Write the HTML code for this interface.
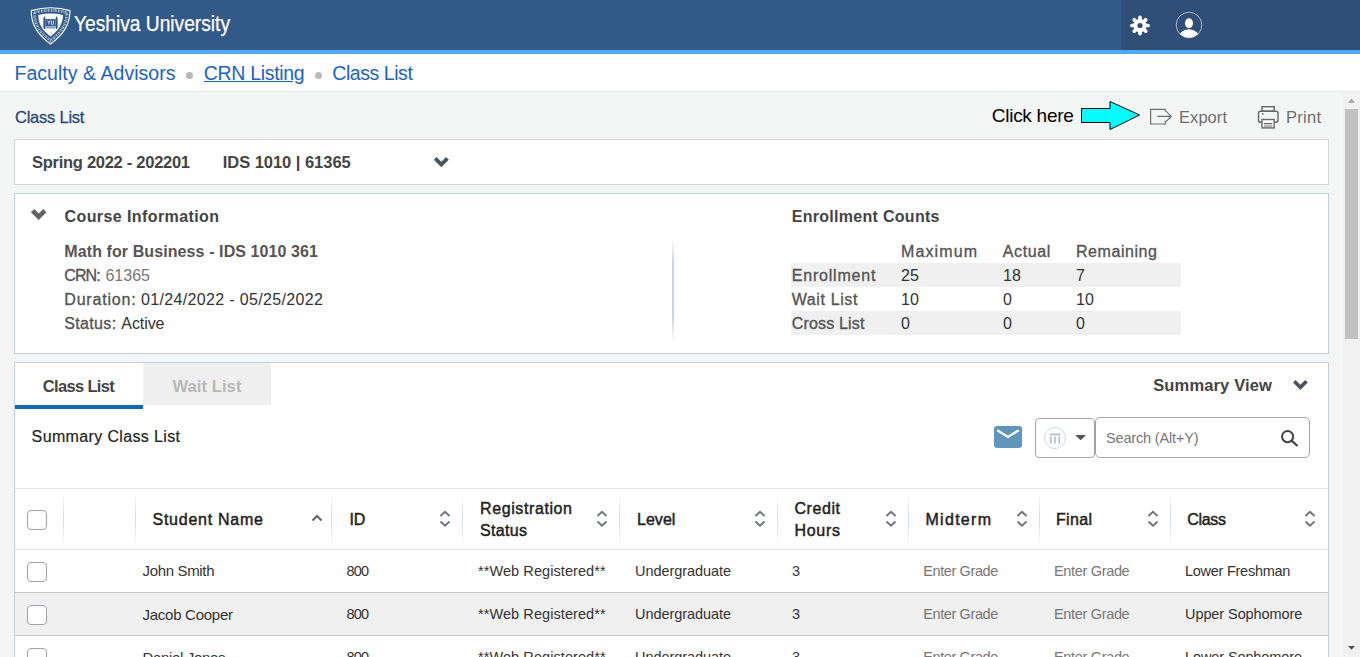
<!DOCTYPE html>
<html><head><meta charset="utf-8"><title>Class List</title>
<style>
*{box-sizing:border-box;margin:0;padding:0}
html,body{width:1360px;height:657px;overflow:hidden}
body{font-family:"Liberation Sans",sans-serif;background:#f4f6f6;position:relative}
.t{position:absolute;white-space:nowrap}
.r{position:absolute}
svg{position:absolute;overflow:visible}
</style></head><body>
<div class="r" style="left:0px;top:0px;width:1360px;height:50px;background:#325a88"></div>
<div class="r" style="left:1121px;top:0px;width:239px;height:50px;background:#2f4f78"></div>
<div class="r" style="left:0px;top:50px;width:1360px;height:4px;background:#50a8f8"></div>
<div class="r" style="left:0px;top:54px;width:1360px;height:37px;background:#fff"></div>
<div class="r" style="left:0px;top:91px;width:1360px;height:1px;background:#e6e8e8"></div>
<div class="t" style="left:14.50px;top:64.00px;font-size:19.5px;line-height:19.5px;color:#1a63c8;letter-spacing:0.035px;">Faculty &amp; Advisors</div>
<div class="r" style="left:186px;top:72px;width:7px;height:7px;background:#b9b9b9;border-radius:50%"></div>
<div class="t" style="left:203.70px;top:64.00px;font-size:19.5px;line-height:19.5px;color:#1a63c8;letter-spacing:-0.305px;">CRN Listing</div>
<div class="r" style="left:204px;top:81px;width:89px;height:1.2px;background:#1a63c8"></div>
<div class="r" style="left:315px;top:72px;width:7px;height:7px;background:#b9b9b9;border-radius:50%"></div>
<div class="t" style="left:332.30px;top:64.00px;font-size:19.5px;line-height:19.5px;color:#1a63c8;letter-spacing:-0.444px;">Class List</div>
<div class="r" style="left:1343px;top:92px;width:17px;height:565px;background:#f1f1f1"></div>
<div class="r" style="left:1345px;top:109px;width:13px;height:230px;background:#c1c1c1"></div>
<svg style="left:1343px;top:92px" width="17" height="565"><path d="M4.8 10.8 L12.2 10.8 L8.5 6.7Z" fill="#a3a3a3"/><path d="M5 554 L12 554 L8.5 557.8Z" fill="#505050"/></svg>
<div class="t" style="left:15.00px;top:109.00px;font-size:16.5px;line-height:16.5px;color:#29497a;letter-spacing:-0.233px;-webkit-text-stroke:0.3px #29497a;">Class List</div>
<div class="t" style="left:991.80px;top:106.00px;font-size:19px;line-height:19px;color:#000;letter-spacing:-0.272px;">Click here</div>
<svg style="left:1080px;top:100px" width="62" height="32"><path d="M1.5 8.5 H30 V1.5 L59.5 15 L30 29.5 V22.5 H1.5 Z" fill="#00ffff" stroke="#000" stroke-width="1"/></svg>
<div class="t" style="left:1179.00px;top:109.00px;font-size:16.5px;line-height:16.5px;color:#6e6e6e;letter-spacing:0.060px;">Export</div>
<div class="t" style="left:1286.00px;top:109.00px;font-size:16.5px;line-height:16.5px;color:#6e6e6e;letter-spacing:0.262px;">Print</div>
<div class="r" style="left:14px;top:139px;width:1315px;height:46px;background:#fff;border:1px solid #d6d6d6"></div>
<div class="t" style="left:32.00px;top:154.00px;font-size:16.5px;line-height:16.5px;color:#444;font-weight:bold;letter-spacing:-0.276px;">Spring 2022 - 202201</div>
<svg style="left:0;top:0" width="1" height="1"><path d="M433.80 159.70 L436.50 157.00 L441.30 161.80 L446.10 157.00 L448.80 159.70 L441.30 167.20Z" fill="#4b5560"/></svg>
<div class="t" style="left:222.70px;top:154.00px;font-size:16.5px;line-height:16.5px;color:#444;font-weight:bold;letter-spacing:-0.030px;">IDS 1010 | 61365</div>
<div class="r" style="left:14px;top:193px;width:1315px;height:161px;background:#fff;border:1px solid #c3d0dc"></div>
<div class="t" style="left:64.50px;top:209.00px;font-size:16px;line-height:16px;color:#444;font-weight:bold;letter-spacing:0.409px;">Course Information</div>
<div class="t" style="left:64.30px;top:244.00px;font-size:16px;line-height:16px;color:#555;font-weight:bold;letter-spacing:0.095px;">Math for Business - IDS 1010 361</div>
<div class="t" style="left:791.70px;top:209.00px;font-size:16px;line-height:16px;color:#444;font-weight:bold;letter-spacing:0.294px;">Enrollment Counts</div>
<div class="r" style="left:14px;top:362px;width:1315px;height:300px;background:#fff;border:1px solid #c3d0dc"></div>
<svg style="left:0;top:0" width="1" height="1"><path d="M30.90 212.30 L34.20 209.00 L38.70 213.50 L43.20 209.00 L46.50 212.30 L38.70 220.10Z" fill="#646464"/></svg>
<div class="t" style="left:64.30px;top:268.00px;font-size:16px;line-height:16px;color:#555;letter-spacing:-0.900px;-webkit-text-stroke:0.35px #555;">CRN:</div>
<div class="t" style="left:105.40px;top:268.00px;font-size:16px;line-height:16px;color:#777;letter-spacing:0.025px;">61365</div>
<div class="t" style="left:64.30px;top:292.00px;font-size:16px;line-height:16px;color:#555;letter-spacing:0.812px;-webkit-text-stroke:0.35px #555;">Duration:</div>
<div class="t" style="left:141.00px;top:292.00px;font-size:16px;line-height:16px;color:#333;letter-spacing:0.345px;">01/24/2022 - 05/25/2022</div>
<div class="t" style="left:64.30px;top:316.00px;font-size:16px;line-height:16px;color:#555;letter-spacing:0.333px;-webkit-text-stroke:0.35px #555;">Status:</div>
<div class="t" style="left:121.30px;top:316.00px;font-size:16px;line-height:16px;color:#333;letter-spacing:-0.070px;">Active</div>
<div class="r" style="left:672px;top:237px;width:2px;height:105px;background:linear-gradient(to bottom,rgba(200,210,222,0),#ccd4de 25%,#ccd4de 75%,rgba(200,210,222,0))"></div>
<div class="r" style="left:791px;top:263px;width:390px;height:24px;background:#f0f0f0"></div>
<div class="r" style="left:791px;top:311px;width:390px;height:24px;background:#f0f0f0"></div>
<div class="t" style="left:901.00px;top:244.00px;font-size:16px;line-height:16px;color:#555;letter-spacing:1.108px;-webkit-text-stroke:0.35px #555;">Maximum</div>
<div class="t" style="left:1002.80px;top:244.00px;font-size:16px;line-height:16px;color:#555;letter-spacing:0.630px;-webkit-text-stroke:0.35px #555;">Actual</div>
<div class="t" style="left:1076.00px;top:244.00px;font-size:16px;line-height:16px;color:#555;letter-spacing:0.562px;-webkit-text-stroke:0.35px #555;">Remaining</div>
<div class="t" style="left:791.70px;top:268.00px;font-size:16px;line-height:16px;color:#555;letter-spacing:0.811px;-webkit-text-stroke:0.35px #555;">Enrollment</div>
<div class="t" style="left:901.00px;top:268.00px;font-size:16px;line-height:16px;color:#333;">25</div>
<div class="t" style="left:1003.00px;top:268.00px;font-size:16px;line-height:16px;color:#333;">18</div>
<div class="t" style="left:1076.00px;top:268.00px;font-size:16px;line-height:16px;color:#333;">7</div>
<div class="t" style="left:791.70px;top:292.00px;font-size:16px;line-height:16px;color:#555;letter-spacing:0.619px;-webkit-text-stroke:0.35px #555;">Wait List</div>
<div class="t" style="left:901.00px;top:292.00px;font-size:16px;line-height:16px;color:#333;">10</div>
<div class="t" style="left:1003.00px;top:292.00px;font-size:16px;line-height:16px;color:#333;">0</div>
<div class="t" style="left:1076.00px;top:292.00px;font-size:16px;line-height:16px;color:#333;">10</div>
<div class="t" style="left:791.70px;top:316.00px;font-size:16px;line-height:16px;color:#555;letter-spacing:0.172px;-webkit-text-stroke:0.35px #555;">Cross List</div>
<div class="t" style="left:901.00px;top:316.00px;font-size:16px;line-height:16px;color:#333;">0</div>
<div class="t" style="left:1003.00px;top:316.00px;font-size:16px;line-height:16px;color:#333;">0</div>
<div class="t" style="left:1076.00px;top:316.00px;font-size:16px;line-height:16px;color:#333;">0</div>
<div class="r" style="left:15px;top:363px;width:128px;height:42px;background:#fff"></div>
<div class="r" style="left:15px;top:405px;width:128px;height:4px;background:#0b66c9"></div>
<div class="r" style="left:143px;top:363px;width:128px;height:42px;background:#efefef"></div>
<div class="t" style="left:42.80px;top:378.00px;font-size:16.5px;line-height:16.5px;color:#444;font-weight:bold;letter-spacing:-0.661px;">Class List</div>
<div class="t" style="left:172.40px;top:378.00px;font-size:16.5px;line-height:16.5px;color:#b8b8b8;font-weight:bold;letter-spacing:0.106px;">Wait List</div>
<div class="t" style="left:1153.20px;top:377.00px;font-size:16.5px;line-height:16.5px;color:#444;font-weight:bold;letter-spacing:0.150px;">Summary View</div>
<svg style="left:0;top:0" width="1" height="1"><path d="M1293.00 382.60 L1295.60 380.00 L1300.40 384.80 L1305.20 380.00 L1307.80 382.60 L1300.40 390.00Z" fill="#4b5560"/></svg>
<div class="t" style="left:31.60px;top:429.00px;font-size:16px;line-height:16px;color:#222;letter-spacing:0.362px;-webkit-text-stroke:0.2px #222;">Summary Class List</div>
<svg style="left:994px;top:426px" width="28" height="22"><rect x="0" y="0" width="28" height="22" rx="3" fill="#5f96bb"/><path d="M3.2 4.2 L14 11 L24.8 4.2" fill="none" stroke="#fff" stroke-width="2.3"/></svg>
<div class="r" style="left:1035px;top:418px;width:60px;height:40px;border:1.5px solid #a4a4a4;border-radius:4px;background:#fff"></div>
<svg style="left:1035px;top:418px" width="60" height="40"><circle cx="20" cy="20" r="10.5" fill="none" stroke="#cddbe6" stroke-width="1"/><rect x="14.8" y="15.5" width="10.4" height="1.8" fill="#a9c0d3"/><rect x="15" y="18.5" width="1.6" height="7" fill="#a9c0d3"/><rect x="19.2" y="18.5" width="1.6" height="7" fill="#a9c0d3"/><rect x="23.4" y="18.5" width="1.6" height="7" fill="#a9c0d3"/><path d="M40.2 17 L51 17 L45.6 22.2Z" fill="#555"/></svg>
<div class="r" style="left:1095px;top:417px;width:215px;height:41px;border:1.5px solid #a4a4a4;border-radius:5px;background:#fff"></div>
<div class="t" style="left:1106.00px;top:431.00px;font-size:14.5px;line-height:14.5px;color:#777;letter-spacing:-0.162px;">Search (Alt+Y)</div>
<svg style="left:1278px;top:427px" width="24" height="22"><circle cx="9.6" cy="9.6" r="5.6" fill="none" stroke="#444" stroke-width="2"/><path d="M13.6 13.6 L19.5 19" stroke="#444" stroke-width="2.2"/></svg>
<div class="r" style="left:15px;top:488px;width:1313px;height:1px;background:#e3e6e8"></div>
<div class="r" style="left:15px;top:549px;width:1313px;height:1px;background:#e3e6e8"></div>
<div class="r" style="left:63px;top:490px;width:1px;height:58px;background:linear-gradient(to bottom,rgba(215,222,230,0),#d2d9e3 50%,rgba(215,222,230,0))"></div>
<div class="r" style="left:135px;top:490px;width:1px;height:58px;background:linear-gradient(to bottom,rgba(215,222,230,0),#d2d9e3 50%,rgba(215,222,230,0))"></div>
<div class="r" style="left:331px;top:490px;width:1px;height:58px;background:linear-gradient(to bottom,rgba(215,222,230,0),#d2d9e3 50%,rgba(215,222,230,0))"></div>
<div class="r" style="left:462px;top:490px;width:1px;height:58px;background:linear-gradient(to bottom,rgba(215,222,230,0),#d2d9e3 50%,rgba(215,222,230,0))"></div>
<div class="r" style="left:619px;top:490px;width:1px;height:58px;background:linear-gradient(to bottom,rgba(215,222,230,0),#d2d9e3 50%,rgba(215,222,230,0))"></div>
<div class="r" style="left:777px;top:490px;width:1px;height:58px;background:linear-gradient(to bottom,rgba(215,222,230,0),#d2d9e3 50%,rgba(215,222,230,0))"></div>
<div class="r" style="left:908px;top:490px;width:1px;height:58px;background:linear-gradient(to bottom,rgba(215,222,230,0),#d2d9e3 50%,rgba(215,222,230,0))"></div>
<div class="r" style="left:1039px;top:490px;width:1px;height:58px;background:linear-gradient(to bottom,rgba(215,222,230,0),#d2d9e3 50%,rgba(215,222,230,0))"></div>
<div class="r" style="left:1170px;top:490px;width:1px;height:58px;background:linear-gradient(to bottom,rgba(215,222,230,0),#d2d9e3 50%,rgba(215,222,230,0))"></div>
<div class="r" style="left:27px;top:510px;width:20px;height:20px;border:1px solid #9ea2a8;border-radius:4px;background:#fff"></div>
<div class="t" style="left:152.50px;top:512.00px;font-size:16px;line-height:16px;color:#222;letter-spacing:0.745px;-webkit-text-stroke:0.45px #222;">Student Name</div>
<svg style="left:310.7px;top:513.4px" width="12" height="10"><path d="M1.5 7.5 L6 3 L10.5 7.5" fill="none" stroke="#5a6270" stroke-width="2"/></svg>
<div class="t" style="left:349.40px;top:512.00px;font-size:16px;line-height:16px;color:#222;-webkit-text-stroke:0.45px #222;">ID</div>
<svg style="left:439px;top:510px" width="12" height="18"><path d="M1.5 6 L6 1.8 L10.5 6 M1.5 11.5 L6 15.7 L10.5 11.5" fill="none" stroke="#6e737a" stroke-width="1.8"/></svg>
<div class="t" style="left:480.00px;top:501.00px;font-size:16px;line-height:16px;color:#222;letter-spacing:0.600px;-webkit-text-stroke:0.45px #222;">Registration</div>
<div class="t" style="left:480.00px;top:523.00px;font-size:16px;line-height:16px;color:#222;letter-spacing:0.330px;-webkit-text-stroke:0.45px #222;">Status</div>
<svg style="left:596px;top:510px" width="12" height="18"><path d="M1.5 6 L6 1.8 L10.5 6 M1.5 11.5 L6 15.7 L10.5 11.5" fill="none" stroke="#6e737a" stroke-width="1.8"/></svg>
<div class="t" style="left:637.00px;top:512.00px;font-size:16px;line-height:16px;color:#222;letter-spacing:0.037px;-webkit-text-stroke:0.45px #222;">Level</div>
<svg style="left:754px;top:510px" width="12" height="18"><path d="M1.5 6 L6 1.8 L10.5 6 M1.5 11.5 L6 15.7 L10.5 11.5" fill="none" stroke="#6e737a" stroke-width="1.8"/></svg>
<div class="t" style="left:794.40px;top:501.00px;font-size:16px;line-height:16px;color:#222;letter-spacing:0.580px;-webkit-text-stroke:0.45px #222;">Credit</div>
<div class="t" style="left:794.40px;top:523.00px;font-size:16px;line-height:16px;color:#222;letter-spacing:0.725px;-webkit-text-stroke:0.45px #222;">Hours</div>
<svg style="left:885px;top:510px" width="12" height="18"><path d="M1.5 6 L6 1.8 L10.5 6 M1.5 11.5 L6 15.7 L10.5 11.5" fill="none" stroke="#6e737a" stroke-width="1.8"/></svg>
<div class="t" style="left:925.50px;top:512.00px;font-size:16px;line-height:16px;color:#222;letter-spacing:1.283px;-webkit-text-stroke:0.45px #222;">Midterm</div>
<svg style="left:1016px;top:510px" width="12" height="18"><path d="M1.5 6 L6 1.8 L10.5 6 M1.5 11.5 L6 15.7 L10.5 11.5" fill="none" stroke="#6e737a" stroke-width="1.8"/></svg>
<div class="t" style="left:1056.00px;top:512.00px;font-size:16px;line-height:16px;color:#222;letter-spacing:0.325px;-webkit-text-stroke:0.45px #222;">Final</div>
<svg style="left:1147px;top:510px" width="12" height="18"><path d="M1.5 6 L6 1.8 L10.5 6 M1.5 11.5 L6 15.7 L10.5 11.5" fill="none" stroke="#6e737a" stroke-width="1.8"/></svg>
<div class="t" style="left:1187.30px;top:512.00px;font-size:16px;line-height:16px;color:#222;letter-spacing:-0.325px;-webkit-text-stroke:0.45px #222;">Class</div>
<svg style="left:1304px;top:510px" width="12" height="18"><path d="M1.5 6 L6 1.8 L10.5 6 M1.5 11.5 L6 15.7 L10.5 11.5" fill="none" stroke="#6e737a" stroke-width="1.8"/></svg>
<div class="r" style="left:15px;top:592px;width:1313px;height:43px;background:#f0f0f0"></div>
<div class="r" style="left:15px;top:592px;width:1313px;height:1px;background:#c8c8c8"></div>
<div class="r" style="left:15px;top:635px;width:1313px;height:1px;background:#c8c8c8"></div>
<div class="r" style="left:27px;top:562px;width:20px;height:20px;border:1px solid #9ea2a8;border-radius:4px;background:#fff"></div>
<div class="t" style="left:142.50px;top:563.00px;font-size:15px;line-height:15px;color:#333;letter-spacing:-0.339px;">John Smith</div>
<div class="t" style="left:346.50px;top:564.00px;font-size:14.5px;line-height:14.5px;color:#333;letter-spacing:-0.850px;">800</div>
<div class="t" style="left:478.00px;top:564.00px;font-size:14.5px;line-height:14.5px;color:#333;letter-spacing:0.079px;">**Web Registered**</div>
<div class="t" style="left:635.00px;top:564.00px;font-size:14.5px;line-height:14.5px;color:#333;letter-spacing:-0.062px;">Undergraduate</div>
<div class="t" style="left:792.00px;top:564.00px;font-size:14.5px;line-height:14.5px;color:#333;">3</div>
<div class="t" style="left:923.30px;top:564.00px;font-size:14.5px;line-height:14.5px;color:#777;letter-spacing:-0.400px;">Enter Grade</div>
<div class="t" style="left:1054.00px;top:564.00px;font-size:14.5px;line-height:14.5px;color:#777;letter-spacing:-0.330px;">Enter Grade</div>
<div class="t" style="left:1185.00px;top:564.00px;font-size:14.5px;line-height:14.5px;color:#333;letter-spacing:-0.262px;">Lower Freshman</div>
<div class="r" style="left:27px;top:605px;width:20px;height:20px;border:1px solid #9ea2a8;border-radius:4px;background:#fff"></div>
<div class="t" style="left:142.50px;top:607.00px;font-size:15px;line-height:15px;color:#333;letter-spacing:-0.264px;">Jacob Cooper</div>
<div class="t" style="left:346.50px;top:607.00px;font-size:14.5px;line-height:14.5px;color:#333;letter-spacing:-0.850px;">800</div>
<div class="t" style="left:478.00px;top:607.00px;font-size:14.5px;line-height:14.5px;color:#333;letter-spacing:0.079px;">**Web Registered**</div>
<div class="t" style="left:635.00px;top:607.00px;font-size:14.5px;line-height:14.5px;color:#333;letter-spacing:-0.062px;">Undergraduate</div>
<div class="t" style="left:792.00px;top:607.00px;font-size:14.5px;line-height:14.5px;color:#333;">3</div>
<div class="t" style="left:923.30px;top:607.00px;font-size:14.5px;line-height:14.5px;color:#777;letter-spacing:-0.400px;">Enter Grade</div>
<div class="t" style="left:1054.00px;top:607.00px;font-size:14.5px;line-height:14.5px;color:#777;letter-spacing:-0.330px;">Enter Grade</div>
<div class="t" style="left:1185.00px;top:607.00px;font-size:14.5px;line-height:14.5px;color:#333;letter-spacing:-0.079px;">Upper Sophomore</div>
<div class="r" style="left:27px;top:648px;width:20px;height:20px;border:1px solid #9ea2a8;border-radius:4px;background:#fff"></div>
<div class="t" style="left:142.50px;top:650.00px;font-size:15px;line-height:15px;color:#333;letter-spacing:-0.336px;">Daniel Jones</div>
<div class="t" style="left:346.50px;top:650.00px;font-size:14.5px;line-height:14.5px;color:#333;letter-spacing:-0.850px;">800</div>
<div class="t" style="left:478.00px;top:650.00px;font-size:14.5px;line-height:14.5px;color:#333;letter-spacing:0.079px;">**Web Registered**</div>
<div class="t" style="left:635.00px;top:650.00px;font-size:14.5px;line-height:14.5px;color:#333;letter-spacing:-0.062px;">Undergraduate</div>
<div class="t" style="left:792.00px;top:650.00px;font-size:14.5px;line-height:14.5px;color:#333;">3</div>
<div class="t" style="left:923.30px;top:650.00px;font-size:14.5px;line-height:14.5px;color:#777;letter-spacing:-0.400px;">Enter Grade</div>
<div class="t" style="left:1054.00px;top:650.00px;font-size:14.5px;line-height:14.5px;color:#777;letter-spacing:-0.330px;">Enter Grade</div>
<div class="t" style="left:1185.00px;top:650.00px;font-size:14.5px;line-height:14.5px;color:#333;letter-spacing:-0.107px;">Lower Sophomore</div>
<div class="t" style="left:74.40px;top:14.00px;font-size:21.5px;line-height:21.5px;color:#fff;-webkit-text-stroke:0.25px #fff;transform:scaleX(0.8922);transform-origin:0.00px 0;">Yeshiva University</div>
<svg style="left:0;top:0" width="1" height="1">
<path d="M31.3 10.6 Q50.8 5 70 10.6 C70.2 25 62 36 50.5 44 C39 36 30.8 25 31.3 10.6Z" fill="none" stroke="#fff" stroke-width="1.1"/>
<path d="M34.4 12.6 Q50.8 8 66.9 12.6 C67 24.5 60 33.5 50.5 40.4 C41 33.5 34 24.5 34.4 12.6Z" fill="none" stroke="#fff" stroke-width="2.8" stroke-dasharray="1.1 0.7 0.5 1.1" opacity="0.7"/>
<path d="M38.3 15 Q50.8 12.2 63 15 C63 24 58 31 50.5 36.4 C43 31 38 24 38.3 15Z" fill="#fff"/>
<path d="M44.4 16 L45.5 18.6 V27.4 L44.4 29.6 L43.3 27.4 V18.6Z M56.6 16 L57.7 18.6 V27.4 L56.6 29.6 L55.5 27.4 V18.6Z" fill="#325a88"/>
<rect x="45.5" y="19.1" width="10" height="7.1" fill="#325a88"/>
<rect x="45.5" y="26.2" width="10" height="2.4" fill="#8aa4c4"/>
<path d="M47.6 20.6 L48.9 22.6 V24.6 M50.2 20.6 L48.9 22.6 M51.4 20.6 V23.8 Q51.4 24.7 52.4 24.7 Q53.4 24.7 53.4 23.8 V20.6" fill="none" stroke="#fff" stroke-width="0.8"/>
</svg>
<svg style="left:0;top:0" width="1360" height="50"><g stroke="#fff" stroke-width="3.7" stroke-linecap="round"><line x1="1145.00" y1="25.50" x2="1148.10" y2="25.50"/><line x1="1143.54" y1="29.04" x2="1145.73" y2="31.23"/><line x1="1140.00" y1="30.50" x2="1140.00" y2="33.60"/><line x1="1136.46" y1="29.04" x2="1134.27" y2="31.23"/><line x1="1135.00" y1="25.50" x2="1131.90" y2="25.50"/><line x1="1136.46" y1="21.96" x2="1134.27" y2="19.77"/><line x1="1140.00" y1="20.50" x2="1140.00" y2="17.40"/><line x1="1143.54" y1="21.96" x2="1145.73" y2="19.77"/></g><circle cx="1140" cy="25.5" r="4.6" fill="none" stroke="#fff" stroke-width="4"/></svg>
<svg style="left:1175px;top:11px" width="28" height="28"><defs><clipPath id="uc"><circle cx="14" cy="14" r="12.6"/></clipPath></defs>
<circle cx="14" cy="14" r="12.8" fill="none" stroke="#fff" stroke-width="0.8" opacity="0.75"/>
<ellipse cx="14" cy="12.2" rx="4" ry="4.9" fill="#fff"/>
<ellipse cx="14" cy="27.4" rx="10.6" ry="9.2" fill="#fff" clip-path="url(#uc)"/></svg>
<svg style="left:0;top:0" width="1" height="1"><path d="M1165.3 111.6 V109.4 H1150.6 V124 H1165.3 V120.8" fill="none" stroke="#707070" stroke-width="1.2"/><path d="M1157.3 116.4 H1171 M1166 111.2 L1171.2 116.4 L1166 121.6" fill="none" stroke="#707070" stroke-width="1.2"/></svg>
<svg style="left:0;top:0" width="1" height="1"><g fill="none" stroke="#666" stroke-width="1.4"><rect x="1262" y="106.7" width="12.2" height="4.6"/><path d="M1261.5 122.3 H1260.6 Q1258.5 122.3 1258.5 120.2 V113.4 Q1258.5 111.3 1260.6 111.3 H1275.9 Q1278 111.3 1278 113.4 V120.2 Q1278 122.3 1275.9 122.3 H1274.9"/><rect x="1262" y="119.5" width="12.2" height="8.4" fill="#fff"/><path d="M1264 123.6 H1272.2 M1264 126 H1272.2" stroke-width="1.1"/></g><circle cx="1262.8" cy="113.8" r="0.9" fill="#666"/></svg>
</body></html>
